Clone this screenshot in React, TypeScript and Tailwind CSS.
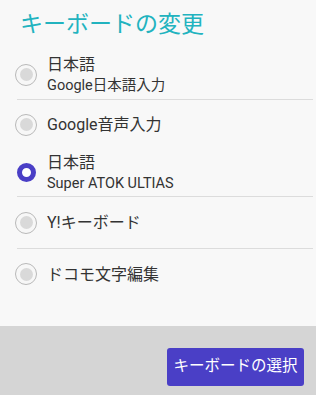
import React from "react";

const font = { fontFamily: 'Roboto, "Noto Sans CJK JP", "Noto Sans", sans-serif' };

function Radio({ selected }: { selected?: boolean }) {
  if (selected) {
    return (
      <div className="w-[22px] h-[22px] flex items-center justify-center shrink-0">
        <div className="w-[19px] h-[19px] rounded-full border-[5px] border-[#4a3fc6] bg-white" />
      </div>
    );
  }
  return (
    <div className="w-[22px] h-[22px] rounded-full border border-[#b9b9b9] bg-[#f7f7f7] flex items-center justify-center shrink-0">
      <div className="w-[13px] h-[13px] rounded-full bg-[#d9d9d9]" />
    </div>
  );
}

function Row({
  title,
  sub,
  selected,
  h,
  divider,
}: {
  title: string;
  sub?: string;
  selected?: boolean;
  h: string;
  divider?: boolean;
}) {
  return (
    <div className={`ml-[17px] ${h} flex items-center ${divider ? "border-b border-[#dcdcdc]" : ""}`}>
      <div className="ml-[-2px] mr-[10px]">
        <Radio selected={selected} />
      </div>
      <div className="flex flex-col text-[#333333]">
        <div className="text-[16px] leading-[21px]">{title}</div>
        {sub && <div className="text-[14.5px] leading-[21px]">{sub}</div>}
      </div>
    </div>
  );
}

export default function App() {
  return (
    <div className="w-[316px] h-[395px] flex flex-col bg-[#f8f8f8]" style={font}>
      <div className="h-[326px] flex flex-col">
        <div className="h-[50px] flex items-center pl-[20px] pb-[1px] text-[23px] text-[#22b3bf] leading-none">
          キーボードの変更
        </div>
        <div className="mr-[3px] flex flex-col">
          <Row title="日本語" sub="Google日本語入力" h="h-[50px]" divider />
          <Row title="Google音声入力" h="h-[49px]" />
          <Row title="日本語" sub="Super ATOK ULTIAS" selected h="h-[48px]" divider />
          <Row title="Y!キーボード" h="h-[52px]" divider />
          <Row title="ドコモ文字編集" h="h-[50px]" />
        </div>
      </div>
      <div className="flex-1 bg-[#d5d5d5] flex items-start justify-end pt-[22px] pr-[12px]">
        <div className="w-[137px] h-[38px] rounded-[3px] bg-[#4a3fc6] text-white text-[15.5px] leading-none flex items-center justify-center">
          キーボードの選択
        </div>
      </div>
    </div>
  );
}
